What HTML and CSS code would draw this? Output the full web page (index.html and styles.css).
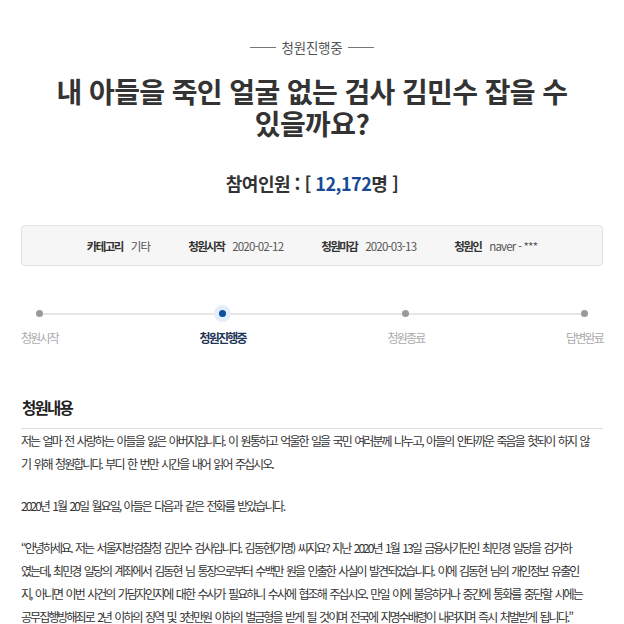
FILE: index.html
```html
<!DOCTYPE html>
<html lang="ko">
<head>
<meta charset="utf-8">
<title>청원진행중</title>
<link rel="stylesheet" href="styles.css">
</head>
<body>
<div class="page">
  <div class="status"><span class="status-line"></span><span class="status-text">청원진행중</span><span class="status-line"></span></div>
  <h1 class="title">내 아들을 죽인 얼굴 없는 검사 김민수 잡을 수<br>있을까요?</h1>
  <div class="count">참여인원 : [ <span class="count-num">12,172</span>명 ]</div>
  <div class="info">
    <div class="info-item"><span class="info-label">카테고리</span><span class="info-value">기타</span></div>
    <div class="info-item"><span class="info-label">청원시작</span><span class="info-value">2020-02-12</span></div>
    <div class="info-item"><span class="info-label">청원마감</span><span class="info-value">2020-03-13</span></div>
    <div class="info-item"><span class="info-label">청원인</span><span class="info-value">naver - ***</span></div>
  </div>
  <div class="steps">
    <div class="step"><span class="dot"></span><span class="step-label">청원시작</span></div>
    <div class="step active"><span class="dot"></span><span class="step-label">청원진행중</span></div>
    <div class="step"><span class="dot"></span><span class="step-label">청원종료</span></div>
    <div class="step"><span class="dot"></span><span class="step-label">답변완료</span></div>
  </div>
  <h2 class="section-title">청원내용</h2>
  <div class="content">
    <p>저는 얼마 전 사랑하는 아들을 잃은 아버지입니다. 이 원통하고 억울한 일을 국민 여러분께 나누고, 아들의 안타까운 죽음을 헛되이 하지 않<br>기 위해 청원합니다. 부디 한 번만 시간을 내어 읽어 주십시오.</p>
    <p>2020년 1월 20일 월요일, 아들은 다음과 같은 전화를 받았습니다.</p>
    <p>“안녕하세요. 저는 서울지방검찰청 김민수 검사입니다. 김동현(가명) 씨지요? 지난 2020년 1월 13일 금융사기단인 최민경 일당을 검거하<br>였는데, 최민경 일당의 계좌에서 김동현 님 통장으로부터 수백만 원을 인출한 사실이 발견되었습니다. 이에 김동현 님의 개인정보 유출인<br>지, 아니면 이번 사건의 가담자인지에 대한 수사가 필요하니 수사에 협조해 주십시오. 만일 이에 불응하거나 중간에 통화를 중단할 시에는<br>공무집행방해죄로 2년 이하의 징역 및 3천만원 이하의 벌금형을 받게 될 것이며 전국에 지명수배령이 내려지며 즉시 처벌받게 됩니다.”</p>
  </div>
</div>
</body>
</html>
```
FILE: styles.css
```css
html, body {
  margin: 0;
  padding: 0;
  background: #fff;
}
body {
  font-family: "Noto Sans CJK KR", "Noto Sans", sans-serif;
  color: #333;
}
.page {
  padding: 0 21px;
}
.status {
  display: flex;
  justify-content: center;
  align-items: center;
  gap: 5px;
  margin-top: 37px;
  height: 20px;
  font-size: 13.5px;
  color: #555;
  letter-spacing: -0.2px;
}
.status-line {
  width: 26px;
  height: 1px;
  background: #777;
}
.title {
  margin: 18px 0 0;
  text-align: center;
  font-size: 28px;
  line-height: 32px;
  font-weight: 700;
  letter-spacing: -0.6px;
  color: #333;
}
.count {
  margin-top: 32px;
  text-align: center;
  font-size: 18px;
  line-height: 24px;
  font-weight: 700;
  letter-spacing: -0.5px;
  color: #333;
}
.count-num {
  color: #174a96;
}
.info {
  margin-top: 30px;
  height: 39px;
  display: flex;
  justify-content: center;
  align-items: center;
  gap: 38px;
  background: #f6f6f6;
  border: 1px solid #e2e2e2;
  border-radius: 4px;
  font-size: 11.5px;
  letter-spacing: -1.6px;
}
.info-item {
  display: flex;
  gap: 8px;
  align-items: center;
}
.info-label {
  font-weight: 700;
  color: #333;
}
.info-value {
  color: #555;
  letter-spacing: -0.8px;
}
.steps {
  position: relative;
  display: flex;
  justify-content: space-between;
  margin-top: 43px;
}
.steps::before {
  content: "";
  position: absolute;
  left: 19px;
  right: 19px;
  top: 4px;
  height: 2px;
  background: #e6e6e6;
}
.step {
  position: relative;
  display: flex;
  flex-direction: column;
  align-items: center;
  gap: 13px;
}
.dot {
  width: 7px;
  height: 7px;
  margin-top: 1px;
  border-radius: 50%;
  background: #999;
}
.step.active .dot {
  background: #0b4ea2;
  box-shadow: 0 0 0 5px #e4eefb;
}
.step-label {
  font-size: 12px;
  line-height: 16px;
  color: #aaa;
  letter-spacing: -1.8px;
}
.step.active .step-label {
  color: #1f3558;
  font-weight: 700;
}
.section-title {
  margin: 50px 0 0;
  padding: 0 0 10px 1px;
  font-size: 15.5px;
  line-height: 22px;
  font-weight: 700;
  letter-spacing: -1.8px;
  border-bottom: 1px solid #dedede;
  color: #222;
}
.content {
  padding-top: 0;
  font-size: 12px;
  line-height: 23px;
  letter-spacing: -1.95px;
  word-spacing: 2px;
  color: #333;
}
.content p {
  margin: 0 0 19px;
}
```
